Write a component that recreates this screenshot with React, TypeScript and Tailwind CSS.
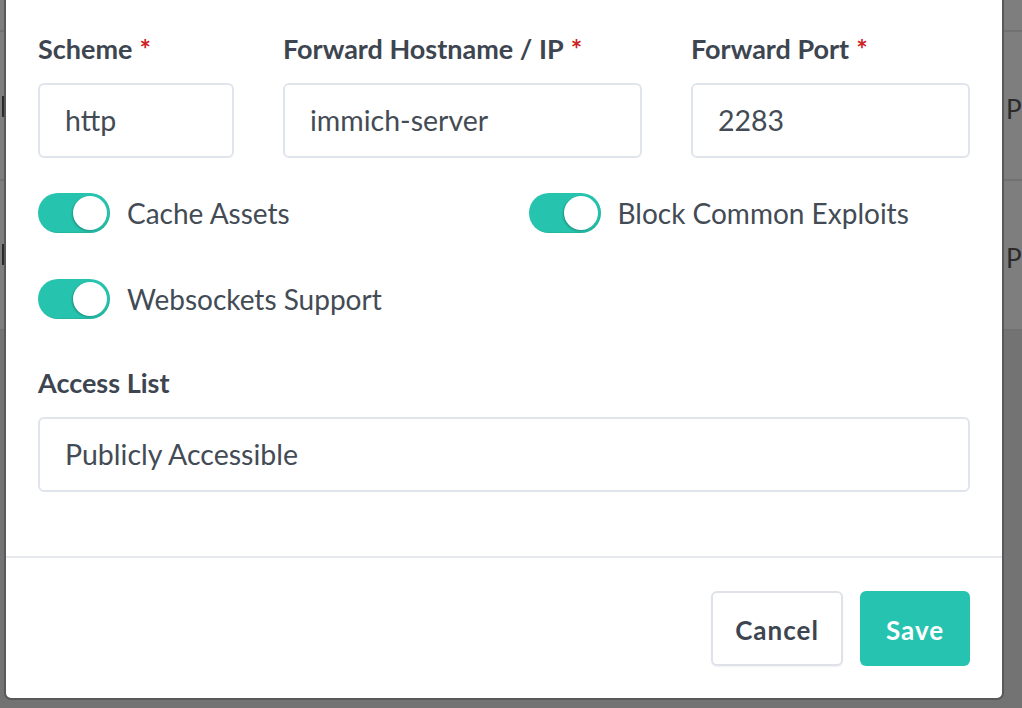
import React from "react";

function Label({ text, required }: { text: string; required?: boolean }) {
  return (
    <div className="mb-[18px] h-[32px] text-[27px] font-bold leading-[32px] text-[#3d4550]">
      {text}
      {required && <span className="ml-[7px] text-[#cd201f]">*</span>}
    </div>
  );
}

function Field({ value }: { value: string }) {
  return (
    <div className="flex h-[75px] items-center rounded-[6px] border-2 border-[#e0e5ec] bg-white px-[25px] text-[28.5px] text-[#434b55]">
      {value}
    </div>
  );
}

function Toggle({ label }: { label: string }) {
  return (
    <div className="flex h-[40px] items-center gap-[17px]">
      <div className="relative h-[40px] w-[72px] shrink-0 rounded-full bg-[#26c4ae] shadow-[inset_-1px_-1px_1px_rgba(0,0,0,0.08)]">
        <div className="absolute right-[3px] top-[3px] h-[34px] w-[34px] rounded-full bg-white shadow-[-1px_1px_2px_rgba(0,0,0,0.25)]" />
      </div>
      <span className="text-[28px] leading-[40px] text-[#434b55]">{label}</span>
    </div>
  );
}

export default function App() {
  return (
    <div
      className="relative h-[708px] w-[1022px] overflow-hidden bg-[#737373]"
      style={{ fontFamily: "Lato, 'Noto Sans', sans-serif" }}
    >
      {/* page behind the overlay */}
      <div className="h-[331px] bg-[#7e7e7e]">
        <div className="h-[32px] border-b-2 border-[#717171]" />
        <div className="relative h-[149px] border-b-2 border-[#717171]">
          <div className="absolute left-[2px] top-[64px] h-[21px] w-[3px] bg-[#2a2a2a]" />
          <span className="absolute left-[1006px] top-[62px] text-[26px] leading-[30px] text-[#2a2a2a]">P</span>
        </div>
        <div className="relative h-[150px] border-b-2 border-[#717171]">
          <div className="absolute left-[2px] top-[63px] h-[21px] w-[3px] bg-[#2a2a2a]" />
          <span className="absolute left-[1006px] top-[62px] text-[26px] leading-[30px] text-[#2a2a2a]">P</span>
        </div>
      </div>

      {/* modal */}
      <div className="absolute left-[4px] top-[-10px] flex h-[710px] w-[1000px] flex-col rounded-b-[7px] border-2 border-[#595959] bg-white">
        <div className="px-[32px] pt-[41px]">
          <div className="flex gap-[49px]">
            <div className="w-[196px]">
              <Label text="Scheme" required />
              <Field value="http" />
            </div>
            <div className="w-[359px]">
              <Label text="Forward Hostname / IP" required />
              <Field value="immich-server" />
            </div>
            <div className="flex-1">
              <Label text="Forward Port" required />
              <Field value="2283" />
            </div>
          </div>

          <div className="mt-[35px] grid grid-cols-2 gap-x-[49px] gap-y-[46px]">
            <Toggle label="Cache Assets" />
            <Toggle label="Block Common Exploits" />
            <Toggle label="Websockets Support" />
          </div>

          <div className="mt-[48px]">
            <Label text="Access List" />
            <Field value="Publicly Accessible" />
          </div>
        </div>

        <div className="mt-[64px] h-[2px] bg-[#e6e9ed]" />

        <div className="flex justify-end gap-[17px] px-[32px] pt-[33px]">
          <button className="h-[75px] w-[132px] rounded-[6px] border-2 border-[#dfe3e9] bg-white pt-[3px] text-[26px] font-bold tracking-[1px] text-[#3d4550] shadow-[0_1px_2px_rgba(0,0,0,0.06)]">
            Cancel
          </button>
          <button className="h-[75px] w-[110px] rounded-[6px] bg-[#26c4b0] pt-[3px] text-[26px] font-bold tracking-[1px] text-white">
            Save
          </button>
        </div>
      </div>
    </div>
  );
}
